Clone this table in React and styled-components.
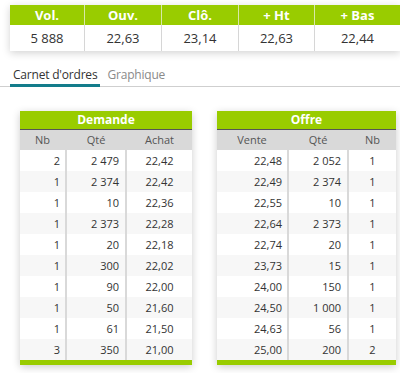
import React from 'react';
import styled, { createGlobalStyle } from 'styled-components';

const GlobalStyle = createGlobalStyle`
  html, body {
    margin: 0;
    padding: 0;
    background: #fff;
    overflow: hidden;
  }
  body {
    font-family: 'Open Sans', 'Liberation Sans', sans-serif;
    color: #333;
  }
`;

const Page = styled.div`
  width: 400px;
  height: 373px;
  padding-top: 5px;
  box-sizing: border-box;
  overflow: hidden;
`;

const Summary = styled.div`
  margin-left: 10px;
  width: 390px;
  display: grid;
  grid-template-columns: 74px 77px 77px 76px 1fr;
  box-shadow: 0 2px 8px rgba(0, 0, 0, 0.18);
  background: #fff;
`;

const SummaryHead = styled.div`
  height: 20px;
  line-height: 20px;
  background: #99cc00;
  color: #fff;
  font-weight: 700;
  font-size: 13px;
  text-align: center;
  border-left: ${(p) => (p.$first ? 'none' : '1px solid #d8e8a8')};
`;

const SummaryValue = styled.div`
  height: 26px;
  line-height: 26px;
  font-size: 13px;
  color: #333;
  text-align: center;
  border-left: ${(p) => (p.$first ? 'none' : '1px solid #d6d6d6')};
`;

const Tabs = styled.div`
  margin-top: 14px;
  display: flex;
  align-items: flex-end;
  padding-left: 10px;
  border-bottom: 1px solid #cfcfcf;
  height: 21px;
`;

const Tab = styled.div`
  font-size: 12px;
  letter-spacing: -0.2px;
  line-height: 18px;
  padding: 0 3px;
  margin-right: 4px;
  margin-bottom: -1px;
  color: ${(p) => (p.$active ? '#333' : '#8a8a8a')};
  border-bottom: 3px solid ${(p) => (p.$active ? '#137c8b' : 'transparent')};
`;

const Books = styled.div`
  margin-top: 24px;
  padding-left: 20px;
  display: flex;
  gap: 25px;
  align-items: flex-start;
`;

const Panel = styled.div`
  width: ${(p) => p.$width}px;
  box-shadow: 0 2px 8px rgba(0, 0, 0, 0.2);
  background: #fff;
`;

const PanelTitle = styled.div`
  height: 18px;
  line-height: 18px;
  background: #99cc00;
  color: #fff;
  font-weight: 700;
  font-size: 12px;
  text-align: center;
  border-bottom: 1px solid #555;
`;

const Row = styled.div`
  display: grid;
  grid-template-columns: ${(p) => p.$cols};
  column-gap: 2px;
  background: #d9d9d9;
`;

const HeadCell = styled.div`
  height: 20px;
  line-height: 20px;
  font-size: 11px;
  color: #555;
  text-align: center;
  background: #d9d9d9;
`;

const Cell = styled.div`
  height: 21px;
  line-height: 21px;
  font-size: 11px;
  color: #333;
  background: ${(p) => (p.$odd ? '#f7f7f7' : '#fff')};
  text-align: ${(p) => p.$align};
  padding: 0 ${(p) => (p.$align === 'right' ? p.$pad : 0)}px 0 0;
`;

const PanelFoot = styled.div`
  height: 5px;
  background: #99cc00;
`;

const summary = [
  ['Vol.', '5 888'],
  ['Ouv.', '22,63'],
  ['Clô.', '23,14'],
  ['+ Ht', '22,63'],
  ['+ Bas', '22,44'],
];

const demande = [
  ['2', '2 479', '22,42'],
  ['1', '2 374', '22,42'],
  ['1', '10', '22,36'],
  ['1', '2 373', '22,28'],
  ['1', '20', '22,18'],
  ['1', '300', '22,02'],
  ['1', '90', '22,00'],
  ['1', '50', '21,60'],
  ['1', '61', '21,50'],
  ['3', '350', '21,00'],
];

const offre = [
  ['22,48', '2 052', '1'],
  ['22,49', '2 374', '1'],
  ['22,55', '10', '1'],
  ['22,64', '2 373', '1'],
  ['22,74', '20', '1'],
  ['23,73', '15', '1'],
  ['24,00', '150', '1'],
  ['24,50', '1 000', '1'],
  ['24,63', '56', '1'],
  ['25,00', '200', '2'],
];

const Book = ({ title, width, cols, headers, aligns, rows }) => (
  <Panel $width={width}>
    <PanelTitle>{title}</PanelTitle>
    <Row $cols={cols}>
      {headers.map((h) => (
        <HeadCell key={h}>{h}</HeadCell>
      ))}
    </Row>
    {rows.map((r, i) => (
      <Row key={i} $cols={cols}>
        {r.map((v, j) => (
          <Cell key={j} $odd={i % 2 === 1} $align={aligns[j][0]} $pad={aligns[j][1]}>
            {v}
          </Cell>
        ))}
      </Row>
    ))}
    <PanelFoot />
  </Panel>
);

const App = () => (
  <Page>
    <GlobalStyle />
    <Summary>
      {summary.map(([h], i) => (
        <SummaryHead key={h} $first={i === 0}>{h}</SummaryHead>
      ))}
      {summary.map(([h, v], i) => (
        <SummaryValue key={h} $first={i === 0}>{v}</SummaryValue>
      ))}
    </Summary>
    <Tabs>
      <Tab $active>Carnet d'ordres</Tab>
      <Tab>Graphique</Tab>
    </Tabs>
    <Books>
      <Book
        title="Demande"
        width={172}
        cols="45px 58px 65px"
        headers={['Nb', 'Qté', 'Achat']}
        aligns={[['right', 5], ['right', 6], ['center', 0]]}
        rows={demande}
      />
      <Book
        title="Offre"
        width={179}
        cols="70px 58px 47px"
        headers={['Vente', 'Qté', 'Nb']}
        aligns={[['right', 5], ['right', 6], ['center', 0]]}
        rows={offre}
      />
    </Books>
  </Page>
);

export default App;
